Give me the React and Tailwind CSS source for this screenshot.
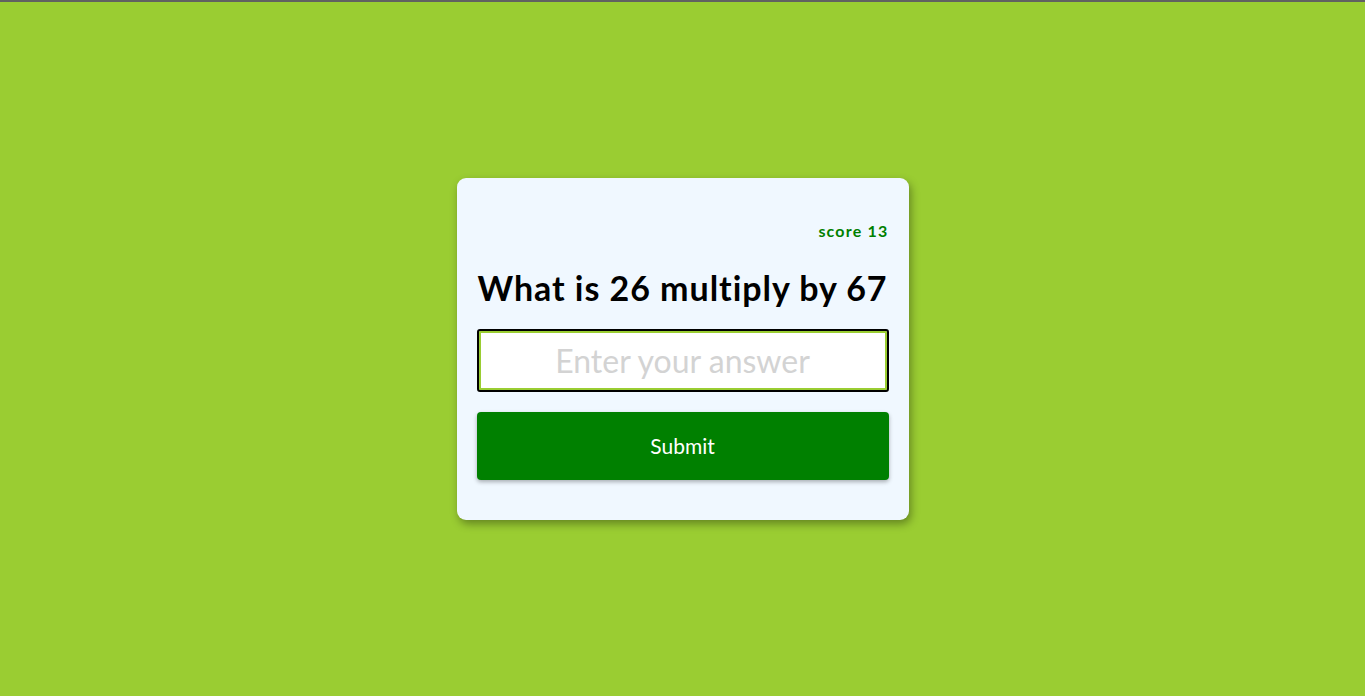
import { useState } from "react";

const font = "font-['Comic_Sans_MS','Lato','Noto_Sans',sans-serif]";

export default function App() {
  const [answer, setAnswer] = useState("");

  return (
    <div className={`min-h-screen flex flex-col bg-[#9acd32] ${font}`}>
      <div className="h-[2px] bg-[#616161] shrink-0" />
      <div className="flex-1 flex items-center justify-center">
        <div className="w-[452px] bg-[#f0f8ff] rounded-[9px] px-5 pt-[43px] pb-10 shadow-[2px_4px_8px_rgba(0,0,0,0.35)]">
          <p className="text-right text-[16px] leading-5 font-bold text-[#008000] tracking-[1.2px]">
            score 13
          </p>
          <h1 className="-mx-3 mt-[25px] whitespace-nowrap text-[34px] leading-[44px] font-bold text-black text-center tracking-[0.95px]">
            What is 26 multiply by 67
          </h1>
          <input
            type="text"
            autoFocus
            value={answer}
            onChange={(e) => setAnswer(e.target.value)}
            placeholder="Enter your answer"
            className={`mt-[19px] block w-full h-[63px] rounded-[3px] border-2 border-black bg-white shadow-[inset_0_0_0_2px_#9acd32] text-center text-[32px] text-black placeholder:text-[#d3d3d3] outline-none ${font}`}
          />
          <button
            type="button"
            className={`mt-5 w-full h-[68px] rounded-[4px] bg-[#008000] text-white text-[21px] shadow-[0_2px_4px_rgba(0,0,0,0.3)] ${font}`}
          >
            Submit
          </button>
        </div>
      </div>
    </div>
  );
}
